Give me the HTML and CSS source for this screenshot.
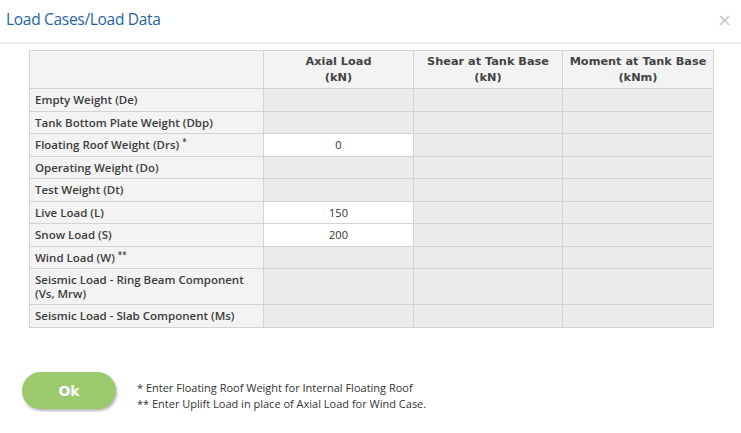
FILE: index.html
```html
<!DOCTYPE html>
<html lang="en">
<head>
    <meta charset="UTF-8">
    <meta name="viewport" content="width=device-width, initial-scale=1.0">
    <title>Load Cases/Load Data</title>
    <link rel="stylesheet" href="styles.css">
</head>
<body>
    <div class="modal">
        <div class="modal-header">
            <h2 class="modal-title">Load Cases/Load Data</h2>
            <span class="close-btn">&times;</span>
        </div>

        <div class="modal-body">
            <table class="load-table">
                <thead>
                    <tr>
                        <th class="label-col"></th>
                        <th>Axial Load<br>(kN)</th>
                        <th>Shear at Tank Base<br>(kN)</th>
                        <th>Moment at Tank Base<br>(kNm)</th>
                    </tr>
                </thead>
                <tbody>
                    <tr>
                        <td class="label">Empty Weight (De)</td>
                        <td></td><td></td><td></td>
                    </tr>
                    <tr>
                        <td class="label">Tank Bottom Plate Weight (Dbp)</td>
                        <td></td><td></td><td></td>
                    </tr>
                    <tr>
                        <td class="label">Floating Roof Weight (Drs) <sup>*</sup></td>
                        <td class="input">0</td><td></td><td></td>
                    </tr>
                    <tr>
                        <td class="label">Operating Weight (Do)</td>
                        <td></td><td></td><td></td>
                    </tr>
                    <tr>
                        <td class="label">Test Weight (Dt)</td>
                        <td></td><td></td><td></td>
                    </tr>
                    <tr>
                        <td class="label">Live Load (L)</td>
                        <td class="input">150</td><td></td><td></td>
                    </tr>
                    <tr>
                        <td class="label">Snow Load (S)</td>
                        <td class="input">200</td><td></td><td></td>
                    </tr>
                    <tr>
                        <td class="label">Wind Load (W) <sup>**</sup></td>
                        <td></td><td></td><td></td>
                    </tr>
                    <tr>
                        <td class="label">Seismic Load - Ring Beam Component<br>(Vs, Mrw)</td>
                        <td></td><td></td><td></td>
                    </tr>
                    <tr>
                        <td class="label">Seismic Load - Slab Component (Ms)</td>
                        <td></td><td></td><td></td>
                    </tr>
                </tbody>
            </table>
        </div>

        <div class="modal-footer">
            <button class="ok-btn">Ok</button>
            <div class="notes">
                <p>* Enter Floating Roof Weight for Internal Floating Roof</p>
                <p>** Enter Uplift Load in place of Axial Load for Wind Case.</p>
            </div>
        </div>
    </div>
</body>
</html>
```

FILE: styles.css
```css
body {
    margin: 0;
    background: #fff;
    font-family: 'Open Sans', sans-serif;
    color: #333;
}

.modal {
    width: 741px;
}

.modal-header {
    display: flex;
    justify-content: space-between;
    align-items: center;
    height: 42px;
    padding: 0 9px 0 6px;
    border-bottom: 2px solid #ececec;
}

.modal-title {
    margin: 0;
    font-size: 15.5px;
    font-weight: 400;
    color: #1f63a3;
    letter-spacing: -0.3px;
    padding-bottom: 4px;
}

.close-btn {
    font-size: 18px;
    color: #c8c8c8;
    font-family: 'DejaVu Sans', sans-serif;
    padding-bottom: 3px;
}

.modal-body {
    padding: 6px 0 0 29px;
}

.load-table {
    border-collapse: collapse;
    width: 685px;
    table-layout: fixed;
    border: 1px solid #d0d0d0;
}

.load-table th,
.load-table td {
    border: 1px solid #d3d3d3;
    padding: 0 5px;
}

.load-table th {
    height: 34px;
    background: #f3f3f3;
    font-family: 'DejaVu Sans', sans-serif;
    font-size: 11.3px;
    font-weight: bold;
    color: #444;
    text-align: center;
    line-height: 16px;
    vertical-align: top;
    padding-top: 3px;
}

.load-table th.label-col {
    width: 223px;
}

.load-table th:nth-child(2) {
    width: 139px;
}

.load-table th:nth-child(3) {
    width: 138px;
}

.load-table td {
    background: #ebebeb;
    font-size: 11.5px;
    line-height: 13.5px;
    padding-top: 4px;
    padding-bottom: 4px;
    color: #333;
}

.load-table td.label {
    background: #f3f3f3;
    font-weight: 600;
    color: #3c3c3c;
}

.load-table td.input {
    background: #fff;
    text-align: center;
    font-size: 11px;
}

.load-table sup {
    font-size: 8px;
    vertical-align: 4px;
    line-height: 0;
}

.modal-footer {
    display: flex;
    align-items: center;
    padding: 42px 0 0 22px;
}

.ok-btn {
    width: 94px;
    height: 37px;
    border: none;
    border-radius: 19px;
    background: #9bc96b;
    color: #fff;
    font-family: 'DejaVu Sans', sans-serif;
    font-weight: bold;
    font-size: 14px;
    box-shadow: 1px 2px 3px rgba(0, 0, 0, 0.3);
    margin-right: 21px;
}

.notes {
    padding-top: 10px;
}

.notes p {
    margin: 0;
    font-size: 11px;
    line-height: 16px;
    color: #333;
}
```
